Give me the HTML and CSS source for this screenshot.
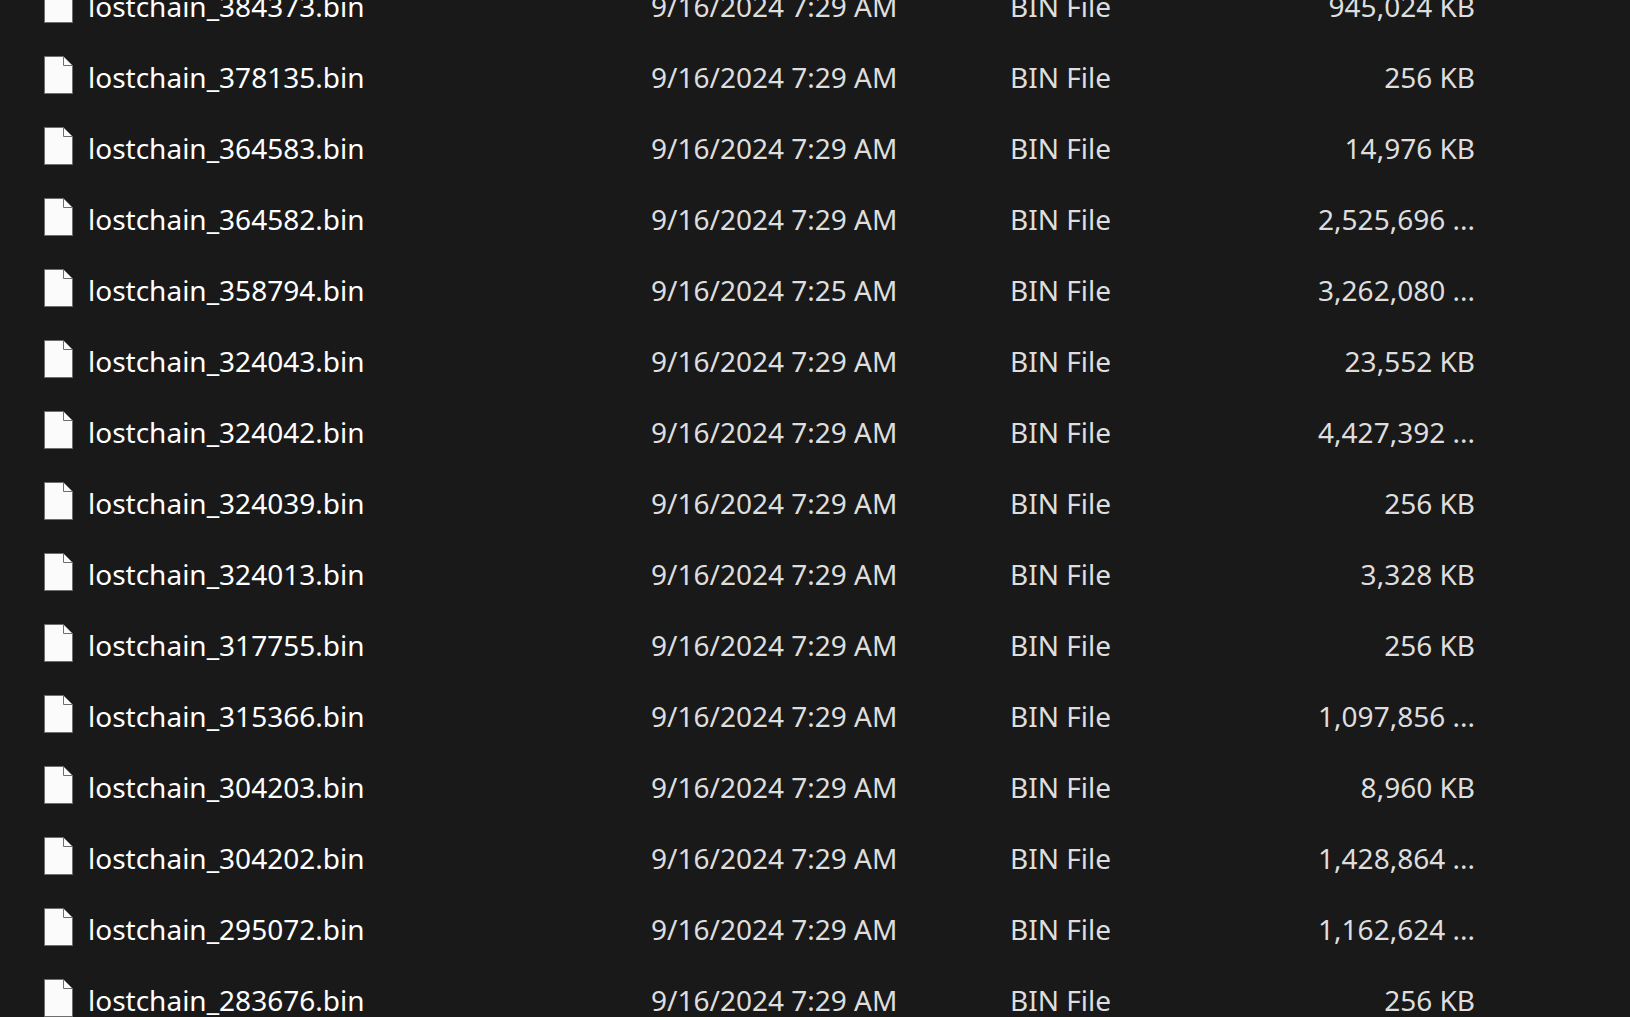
FILE: index.html
```html
<!DOCTYPE html>
<html lang="en">
<head>
    <meta charset="UTF-8">
    <meta name="viewport" content="width=device-width, initial-scale=1.0">
    <title>Recovered files</title>
    <link rel="stylesheet" href="styles.css">
</head>
<body>
    <!-- Shared file icon -->
    <svg class="icon-defs" aria-hidden="true">
        <symbol id="file" viewBox="0 0 29 38">
            <path d="M.5 .5H19.5L28.5 9.5V37.5H.5Z" fill="#fbfbfb"/>
            <path d="M28.5 9.5V37.5H.5V.5H19.5V9.5H28.5" fill="none" stroke="#6e6e6e"/>
            <path d="M20 1L28 9" fill="none" stroke="#8c8c8c"/>
        </symbol>
    </svg>

    <!-- File list, scrolled part way down -->
    <main class="file-view">
        <table class="file-list" aria-label="Files">
            <colgroup>
                <col class="col-name">
                <col class="col-date">
                <col class="col-type">
                <col class="col-size">
            </colgroup>
            <tbody>
                <tr>
                    <td class="name"><div class="file"><svg class="icon"><use href="#file"/></svg>lostchain_384373.bin</div></td>
                    <td>9/16/2024 7:29 AM</td>
                    <td>BIN File</td>
                    <td class="size">945,024 KB</td>
                </tr>
                <tr>
                    <td class="name"><div class="file"><svg class="icon"><use href="#file"/></svg>lostchain_378135.bin</div></td>
                    <td>9/16/2024 7:29 AM</td>
                    <td>BIN File</td>
                    <td class="size">256 KB</td>
                </tr>
                <tr>
                    <td class="name"><div class="file"><svg class="icon"><use href="#file"/></svg>lostchain_364583.bin</div></td>
                    <td>9/16/2024 7:29 AM</td>
                    <td>BIN File</td>
                    <td class="size">14,976 KB</td>
                </tr>
                <tr>
                    <td class="name"><div class="file"><svg class="icon"><use href="#file"/></svg>lostchain_364582.bin</div></td>
                    <td>9/16/2024 7:29 AM</td>
                    <td>BIN File</td>
                    <td class="size">2,525,696 ...</td>
                </tr>
                <tr>
                    <td class="name"><div class="file"><svg class="icon"><use href="#file"/></svg>lostchain_358794.bin</div></td>
                    <td>9/16/2024 7:25 AM</td>
                    <td>BIN File</td>
                    <td class="size">3,262,080 ...</td>
                </tr>
                <tr>
                    <td class="name"><div class="file"><svg class="icon"><use href="#file"/></svg>lostchain_324043.bin</div></td>
                    <td>9/16/2024 7:29 AM</td>
                    <td>BIN File</td>
                    <td class="size">23,552 KB</td>
                </tr>
                <tr>
                    <td class="name"><div class="file"><svg class="icon"><use href="#file"/></svg>lostchain_324042.bin</div></td>
                    <td>9/16/2024 7:29 AM</td>
                    <td>BIN File</td>
                    <td class="size">4,427,392 ...</td>
                </tr>
                <tr>
                    <td class="name"><div class="file"><svg class="icon"><use href="#file"/></svg>lostchain_324039.bin</div></td>
                    <td>9/16/2024 7:29 AM</td>
                    <td>BIN File</td>
                    <td class="size">256 KB</td>
                </tr>
                <tr>
                    <td class="name"><div class="file"><svg class="icon"><use href="#file"/></svg>lostchain_324013.bin</div></td>
                    <td>9/16/2024 7:29 AM</td>
                    <td>BIN File</td>
                    <td class="size">3,328 KB</td>
                </tr>
                <tr>
                    <td class="name"><div class="file"><svg class="icon"><use href="#file"/></svg>lostchain_317755.bin</div></td>
                    <td>9/16/2024 7:29 AM</td>
                    <td>BIN File</td>
                    <td class="size">256 KB</td>
                </tr>
                <tr>
                    <td class="name"><div class="file"><svg class="icon"><use href="#file"/></svg>lostchain_315366.bin</div></td>
                    <td>9/16/2024 7:29 AM</td>
                    <td>BIN File</td>
                    <td class="size">1,097,856 ...</td>
                </tr>
                <tr>
                    <td class="name"><div class="file"><svg class="icon"><use href="#file"/></svg>lostchain_304203.bin</div></td>
                    <td>9/16/2024 7:29 AM</td>
                    <td>BIN File</td>
                    <td class="size">8,960 KB</td>
                </tr>
                <tr>
                    <td class="name"><div class="file"><svg class="icon"><use href="#file"/></svg>lostchain_304202.bin</div></td>
                    <td>9/16/2024 7:29 AM</td>
                    <td>BIN File</td>
                    <td class="size">1,428,864 ...</td>
                </tr>
                <tr>
                    <td class="name"><div class="file"><svg class="icon"><use href="#file"/></svg>lostchain_295072.bin</div></td>
                    <td>9/16/2024 7:29 AM</td>
                    <td>BIN File</td>
                    <td class="size">1,162,624 ...</td>
                </tr>
                <tr>
                    <td class="name"><div class="file"><svg class="icon"><use href="#file"/></svg>lostchain_283676.bin</div></td>
                    <td>9/16/2024 7:29 AM</td>
                    <td>BIN File</td>
                    <td class="size">256 KB</td>
                </tr>
            </tbody>
        </table>
    </main>
</body>
</html>
```
FILE: styles.css
```css
/* General styling */
body {
    font-family: "Segoe UI", "Noto Sans", sans-serif;
    font-size: 28px;
    line-height: 40px;
    margin: 0;
    background-color: #191919;
    color: #dedede;
}
.icon-defs {
    display: none;
}
.file-view {
    height: 100vh;
    overflow: hidden;
}
/* File list */
.file-list {
    width: 100%;
    margin-top: -30px; /* first row is partly scrolled out */
    table-layout: fixed;
    border-collapse: collapse;
}
.col-name {
    width: 651px;
}
.col-date {
    width: 359px;
}
.col-type {
    width: 240px;
}
.file-list td {
    height: 71px;
    padding: 0;
    white-space: nowrap;
}
.file-list .name {
    padding-left: 44px;
    color: #fff;
}
.file {
    display: flex;
    align-items: center;
    gap: 15px;
}
.icon {
    width: 29px;
    height: 38px;
    margin-bottom: 4px;
}
.file-list .size {
    padding-right: 155px;
    text-align: right;
}
```
